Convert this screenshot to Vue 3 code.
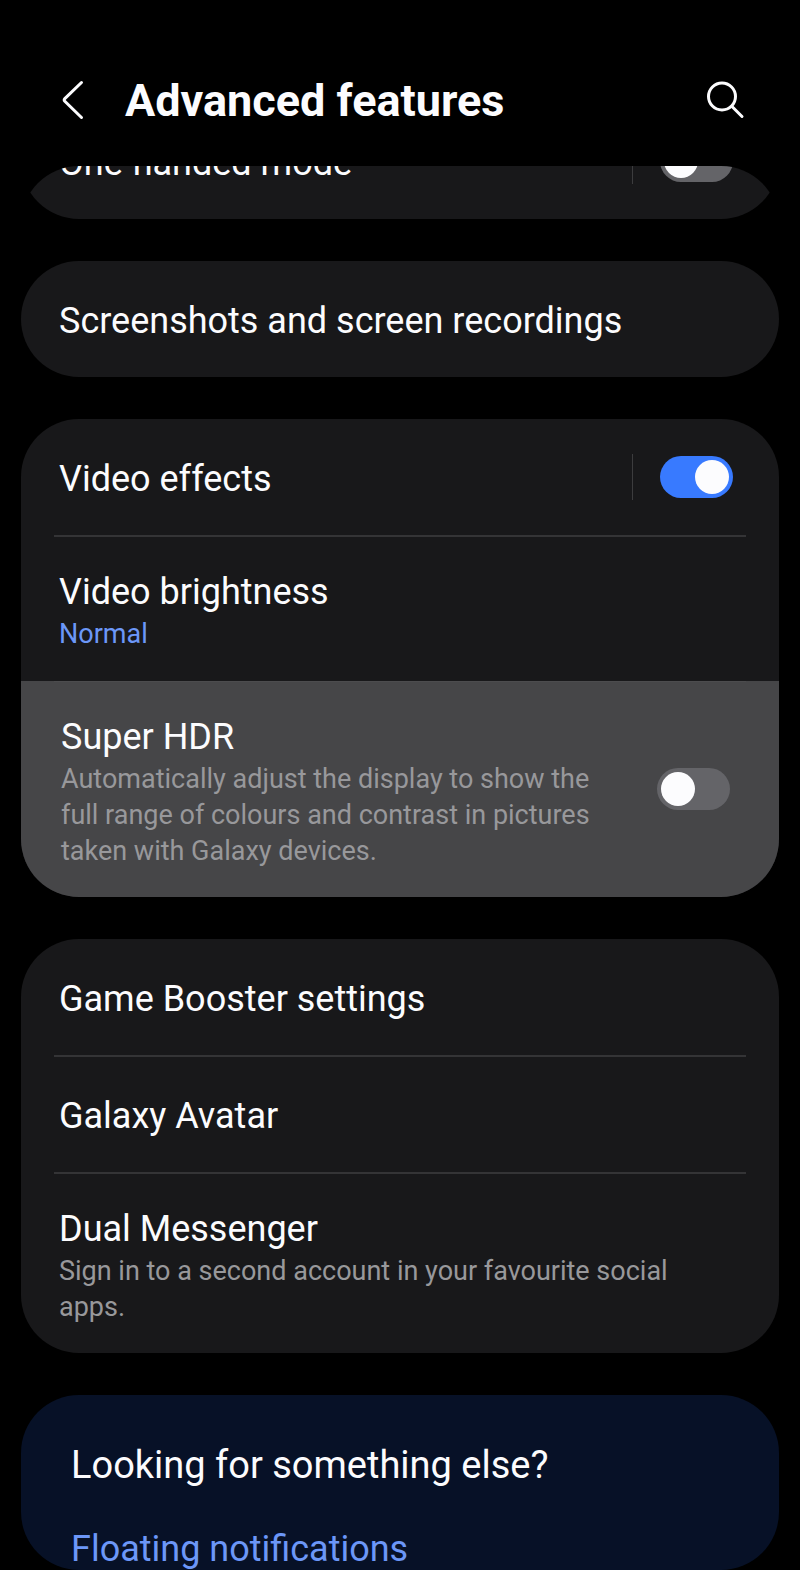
<script setup>
import { reactive } from 'vue'

const groups = reactive([
  [{ id: 'one-handed', title: 'One-handed mode', toggle: true, split: true, on: false }],
  [{ id: 'screenshots', title: 'Screenshots and screen recordings' }],
  [
    { id: 'video-effects', title: 'Video effects', toggle: true, split: true, on: true },
    { id: 'video-brightness', title: 'Video brightness', value: 'Normal' },
    {
      id: 'super-hdr',
      title: 'Super HDR',
      summary: 'Automatically adjust the display to show the full range of colours and contrast in pictures taken with Galaxy devices.',
      toggle: true,
      on: false,
      pressed: true,
    },
  ],
  [
    { id: 'game-booster', title: 'Game Booster settings' },
    { id: 'galaxy-avatar', title: 'Galaxy Avatar' },
    { id: 'dual-messenger', title: 'Dual Messenger', summary: 'Sign in to a second account in your favourite social apps.' },
  ],
])
</script>

<template>
  <div class="screen">
    <header class="bar">
      <button class="icon-button" type="button" aria-label="Back">
        <svg width="40" height="44" viewBox="0 0 40 44" fill="none">
          <path d="M30.500 4.500 13.800 20.700Q12.500 22 13.800 23.300L30.500 39.500" stroke="currentColor" stroke-width="3" stroke-linecap="round" stroke-linejoin="round" />
        </svg>
      </button>
      <h1>Advanced features</h1>
      <button class="icon-button" type="button" aria-label="Search">
        <svg width="44" height="44" viewBox="0 0 44 44" fill="none" stroke="currentColor" stroke-width="3" stroke-linecap="round">
          <circle cx="19" cy="18.500" r="13.500" />
          <path d="M29 28.500 39 38.500" />
        </svg>
      </button>
    </header>

    <main class="viewport">
      <div class="list">
        <section v-for="(group, i) in groups" :key="i" class="card">
          <div v-for="row in group" :key="row.id" class="row" :class="{ pressed: row.pressed }">
            <component
              :is="row.toggle && !row.split ? 'label' : 'a'"
              class="text"
              :for="row.toggle && !row.split ? row.id : null"
              :href="row.toggle && !row.split ? null : '#' + row.id"
            >
              <span class="title">{{ row.title }}</span>
              <span v-if="row.value" class="detail value">{{ row.value }}</span>
              <span v-if="row.summary" class="detail">{{ row.summary }}</span>
            </component>
            <span v-if="row.split" class="rule"></span>
            <input
              v-if="row.toggle"
              :id="row.id"
              v-model="row.on"
              class="switch"
              type="checkbox"
              role="switch"
              :aria-label="row.title"
            />
          </div>
        </section>

        <section class="card related">
          <h2>Looking for something else?</h2>
          <a href="#floating-notifications">Floating notifications</a>
        </section>
      </div>
    </main>
  </div>
</template>

<style>
body {
  background: #000;
}
</style>

<style scoped>
.screen {
  display: flex;
  flex-direction: column;
  box-sizing: border-box;
  height: 100vh;
  padding: 0 21px;
  background: #000;
  color: #fcfcfe;
  font-family: Roboto, "Liberation Sans", sans-serif;
}

.bar {
  display: flex;
  flex: none;
  align-items: center;
  padding: 72px 32px 38px 30px;
}

.bar h1 {
  flex: 1;
  margin: 0 0 0 34px;
  padding-top: 2px;
  font-size: 45px;
  font-weight: 700;
  line-height: 54px;
}

.icon-button {
  display: flex;
  padding: 0;
  border: 0;
  background: none;
  color: inherit;
}

.viewport {
  flex: 1;
  min-height: 0;
  overflow: hidden;
  border-radius: 58px;
}

/* The list rests part-way scrolled under the title bar. */
.list {
  display: flex;
  flex-direction: column;
  gap: 42px;
  margin-top: -63px;
}

.card {
  overflow: hidden;
  border-radius: 58px;
  background: #18181a;
}

.row {
  position: relative;
  display: flex;
  align-items: center;
  box-sizing: border-box;
  min-height: 116px;
  padding: 0 46px 0 38px;
}

.row + .row {
  margin-top: 1px;
}

.row + .row::before {
  content: "";
  position: absolute;
  top: -1px;
  left: 33px;
  right: 33px;
  height: 2px;
  background: #343436;
}

.row.pressed {
  padding: 0 49px 0 40px;
  background: #464648;
}

.row.pressed::before {
  top: 0;
  height: 1px;
  background: #4c4c4e;
}

.text {
  flex: 1;
  padding: 32px 0 28px;
  color: inherit;
  text-decoration: none;
}

.title,
.detail {
  display: block;
}

.title {
  font-size: 36px;
  line-height: 48px;
}

.detail {
  color: #98989b;
  font-size: 27px;
  line-height: 36px;
}

.value {
  color: #6c97f8;
}

.rule {
  width: 1px;
  height: 46px;
  margin-right: 27px;
  background: #3c3c3e;
}

.switch {
  flex: none;
  box-sizing: border-box;
  width: 73px;
  height: 42px;
  margin: 0;
  padding: 4px;
  border-radius: 21px;
  appearance: none;
  background: #646468;
}

.switch::before {
  content: "";
  display: block;
  width: 34px;
  height: 34px;
  border-radius: 50%;
  background: #fcfcfe;
}

.switch:checked {
  background: #387aff;
}

.switch:checked::before {
  margin-left: auto;
}

.pressed .switch {
  margin-left: 56px;
}

.related {
  display: flex;
  flex: none;
  flex-direction: column;
  gap: 40px;
  padding: 48px 50px;
  background: #071127;
}

.related h2,
.related a {
  margin: 0;
  font-size: 38px;
  font-weight: 400;
  line-height: 44px;
}

.related a {
  color: #6c97f8;
  font-size: 36px;
  text-decoration: none;
}
</style>
